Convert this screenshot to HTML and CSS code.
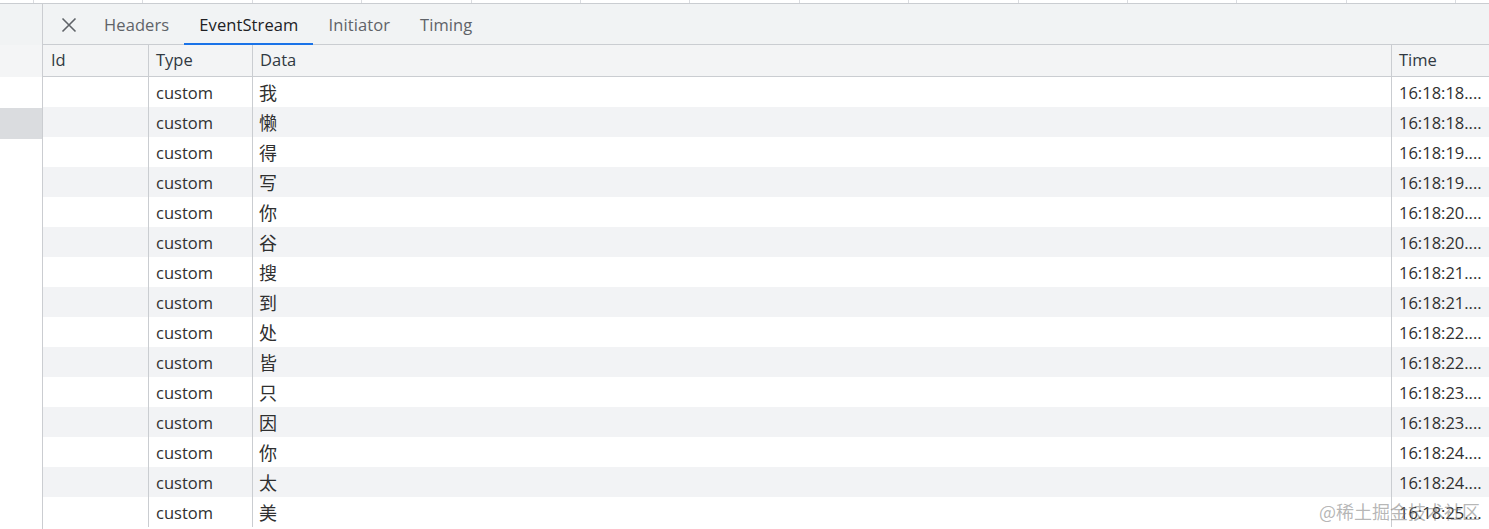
FILE: index.html
```html
<!DOCTYPE html>
<html lang="zh">
<head>
<meta charset="utf-8">
<title>EventStream</title>
<link rel="stylesheet" href="styles.css">
</head>
<body>
<div class="topstrip">
  <span></span><span></span><span></span><span></span><span></span><span></span><span></span><span></span><span></span><span></span><span></span><span></span><span></span><span></span>
</div>
<div class="main">
  <div class="side">
    <div class="s1"></div>
    <div class="s2"></div>
    <div class="s3"></div>
    <div class="s4"></div>
    <div class="s5"></div>
  </div>
  <div class="panel">
    <div class="tabbar">
      <div class="close">
        <svg width="16" height="16" viewBox="0 0 16 16"><path d="M1.5 1.5 L14.5 14.5 M14.5 1.5 L1.5 14.5" stroke="#5f6368" stroke-width="1.6" fill="none"/></svg>
      </div>
      <div class="tab">Headers</div>
      <div class="tab active">EventStream</div>
      <div class="tab">Initiator</div>
      <div class="tab">Timing</div>
    </div>
    <div class="grid">
      <div class="row head"><div class="c">Id</div><div class="c">Type</div><div class="c">Data</div><div class="c">Time</div></div>
      <div class="row"><div class="c"></div><div class="c">custom</div><div class="c cjk">我</div><div class="c">16:18:18....</div></div>
      <div class="row"><div class="c"></div><div class="c">custom</div><div class="c cjk">懒</div><div class="c">16:18:18....</div></div>
      <div class="row"><div class="c"></div><div class="c">custom</div><div class="c cjk">得</div><div class="c">16:18:19....</div></div>
      <div class="row"><div class="c"></div><div class="c">custom</div><div class="c cjk">写</div><div class="c">16:18:19....</div></div>
      <div class="row"><div class="c"></div><div class="c">custom</div><div class="c cjk">你</div><div class="c">16:18:20....</div></div>
      <div class="row"><div class="c"></div><div class="c">custom</div><div class="c cjk">谷</div><div class="c">16:18:20....</div></div>
      <div class="row"><div class="c"></div><div class="c">custom</div><div class="c cjk">搜</div><div class="c">16:18:21....</div></div>
      <div class="row"><div class="c"></div><div class="c">custom</div><div class="c cjk">到</div><div class="c">16:18:21....</div></div>
      <div class="row"><div class="c"></div><div class="c">custom</div><div class="c cjk">处</div><div class="c">16:18:22....</div></div>
      <div class="row"><div class="c"></div><div class="c">custom</div><div class="c cjk">皆</div><div class="c">16:18:22....</div></div>
      <div class="row"><div class="c"></div><div class="c">custom</div><div class="c cjk">只</div><div class="c">16:18:23....</div></div>
      <div class="row"><div class="c"></div><div class="c">custom</div><div class="c cjk">因</div><div class="c">16:18:23....</div></div>
      <div class="row"><div class="c"></div><div class="c">custom</div><div class="c cjk">你</div><div class="c">16:18:24....</div></div>
      <div class="row"><div class="c"></div><div class="c">custom</div><div class="c cjk">太</div><div class="c">16:18:24....</div></div>
      <div class="row"><div class="c"></div><div class="c">custom</div><div class="c cjk">美</div><div class="c">16:18:25....</div></div>
    </div>
  </div>
</div>
<div class="watermark">@稀土掘金技术社区</div>
</body>
</html>
```
FILE: styles.css
```css
* { box-sizing: border-box; }
html, body { margin: 0; padding: 0; }
body {
  width: 1489px;
  height: 529px;
  overflow: hidden;
  background: #ffffff;
  font-family: "Open Sans", "Noto Sans", "Noto Sans CJK SC", sans-serif;
  font-size: 16.5px;
  color: #202124;
  position: relative;
}
.topstrip {
  height: 4px;
  border-bottom: 1px solid #cacdd1;
  display: flex;
  padding-left: 33px;
  gap: 108.4px;
}
.topstrip span {
  width: 1px;
  height: 3px;
  background: #dadce0;
  flex: none;
}
.main {
  display: flex;
  height: 525px;
}
.side {
  width: 43px;
  flex: none;
  border-right: 1px solid #cbcdd1;
  display: flex;
  flex-direction: column;
}
.side .s1 { height: 41px; background: #f1f3f4; }
.side .s2 { height: 32px; background: #f4f5f6; }
.side .s3 { height: 31px; background: #ffffff; }
.side .s4 { height: 31px; background: #dadcdf; }
.side .s5 { flex: 1; background: #ffffff; }
.panel {
  flex: 1;
  display: flex;
  flex-direction: column;
  min-width: 0;
}
.tabbar {
  height: 41px;
  background: #f1f3f4;
  border-bottom: 1px solid #cacdd1;
  display: flex;
  align-items: stretch;
}
.close {
  width: 46px;
  display: flex;
  align-items: center;
  justify-content: center;
  padding-left: 6px;
  padding-top: 1px;
}
.tab {
  padding: 0 15px;
  display: flex;
  align-items: center;
  color: #5f6368;
  border-bottom: 2px solid transparent;
  padding-top: 1px;
  margin-bottom: -1px;
  letter-spacing: 0.1px;
}
.tab.active {
  color: #202124;
  border-bottom-color: #1a73e8;
}
.grid {
  display: flex;
  flex-direction: column;
}
.row {
  display: grid;
  grid-template-columns: 105px 104px 1fr 98px;
  height: 30px;
  color: #303030;
}
.row:nth-child(odd) { background: #f2f3f5; }
.row.head {
  height: 32px;
  background: #f3f4f5;
  border-bottom: 1px solid #cacdd1;
  color: #303942;
}
.c {
  padding: 0 0 0 7px;
  display: flex;
  align-items: center;
  border-left: 1px solid #cacdd1;
  white-space: nowrap;
  overflow: hidden;
}
.c:first-child { border-left: none; padding-left: 8px; }
.head .c { padding-bottom: 3px; }
.cjk { font-size: 18px; padding-left: 6px; }
.watermark {
  position: absolute;
  right: 9px;
  bottom: 5px;
  font-size: 18px;
  color: rgba(120, 120, 120, 0.55);
  font-family: "Noto Sans CJK SC", sans-serif;
}
```
